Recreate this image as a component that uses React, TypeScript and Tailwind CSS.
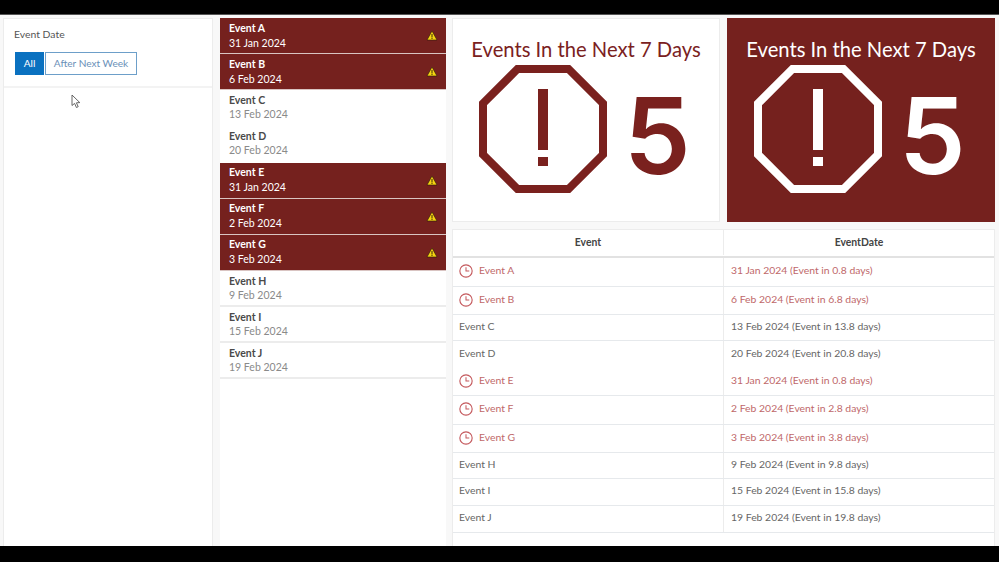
const listItems = [
  { name: "Event A", date: "31 Jan 2024", hot: true },
  { name: "Event B", date: "6 Feb 2024", hot: true },
  { name: "Event C", date: "13 Feb 2024", hot: false, noLine: true },
  { name: "Event D", date: "20 Feb 2024", hot: false, noLine: true, tall: true },
  { name: "Event E", date: "31 Jan 2024", hot: true, tight: true },
  { name: "Event F", date: "2 Feb 2024", hot: true, tight: true },
  { name: "Event G", date: "3 Feb 2024", hot: true, tight: true },
  { name: "Event H", date: "9 Feb 2024", hot: false },
  { name: "Event I", date: "15 Feb 2024", hot: false },
  { name: "Event J", date: "19 Feb 2024", hot: false },
];

const tableRows = [
  { name: "Event A", date: "31 Jan 2024", days: "0.8", hot: true, h: "h-[29px]" },
  { name: "Event B", date: "6 Feb 2024", days: "6.8", hot: true, h: "h-[28px]" },
  { name: "Event C", date: "13 Feb 2024", days: "13.8", hot: false, h: "h-[26px]" },
  { name: "Event D", date: "20 Feb 2024", days: "20.8", hot: false, h: "h-[27px]", noLine: true },
  { name: "Event E", date: "31 Jan 2024", days: "0.8", hot: true, h: "h-[28px]" },
  { name: "Event F", date: "2 Feb 2024", days: "2.8", hot: true, h: "h-[29px]" },
  { name: "Event G", date: "3 Feb 2024", days: "3.8", hot: true, h: "h-[28px]" },
  { name: "Event H", date: "9 Feb 2024", days: "9.8", hot: false, h: "h-[26px]" },
  { name: "Event I", date: "15 Feb 2024", days: "15.8", hot: false, h: "h-[27px]" },
  { name: "Event J", date: "19 Feb 2024", days: "19.8", hot: false, h: "h-[27px]" },
];

function WarningIcon() {
  return (
    <svg width="12" height="11" viewBox="0 0 12 11" className="shrink-0">
      <path d="M6 1 L11 10 L1 10 Z" fill="#f5d312" stroke="#2a1a08" strokeWidth="0.6" />
      <rect x="5.5" y="4" width="1" height="3.5" fill="#3a2806" />
      <rect x="5.5" y="8" width="1" height="1" fill="#3a2806" />
    </svg>
  );
}

function ClockIcon() {
  return (
    <svg width="14" height="14" viewBox="0 0 15 15" fill="none" stroke="#c4585c" className="shrink-0">
      <circle cx="7.5" cy="7.5" r="6.6" strokeWidth="1.2" />
      <path d="M7.5 3.5 V7.5 H11" strokeWidth="1.1" />
    </svg>
  );
}

function StopIcon({ color }: { color: string }) {
  return (
    <svg width="128" height="128" viewBox="0 0 128 128" className="shrink-0">
      <path d="M38.5 4 H89.5 L124 38.5 V89.5 L89.5 124 H38.5 L4 89.5 V38.5 Z" fill="none" stroke={color} strokeWidth="8" />
      <rect x="59" y="24" width="10" height="61" fill={color} />
      <rect x="59" y="92" width="10" height="9" fill={color} />
    </svg>
  );
}

function Card({ dark }: { dark?: boolean }) {
  const color = dark ? "#ffffff" : "#7a211e";
  return (
    <div
      className={
        dark
          ? "w-[268px] h-[204px] bg-[#75211e] flex flex-col items-center border border-[#75211e]"
          : "w-[268px] h-[204px] bg-white flex flex-col items-center border border-[#ececec]"
      }
    >
      <div className={dark ? "mt-[16px] text-[20.2px] leading-[28px] text-white" : "mt-[16px] text-[20.2px] leading-[28px] text-[#7a211e]"}>
        Events In the Next 7 Days
      </div>
      <div className="mt-[2px] w-full flex items-start pl-[26px]">
        <StopIcon color={color} />
        <span className="ml-[17px] mt-[7px] font-['Inter',sans-serif] text-[106px] leading-[128px] font-semibold" style={{ color }}>
          5
        </span>
      </div>
    </div>
  );
}

export default function App() {
  return (
    <div className="w-[999px] h-[562px] overflow-hidden bg-black flex flex-col font-['Lato','Liberation_Sans',sans-serif] text-[#4a4a4a]">
      <div className="h-[15px] shrink-0 border-b border-[#555]" />
      <div className="h-[531px] shrink-0 bg-[#f8f8f8] flex pt-[3px] pl-[3px] gap-[7px]">
        {/* filter panel */}
        <div className="w-[210px] bg-white border border-b-0 border-[#ececec]">
          <div className="h-[69px] border-b-2 border-[#f3f3f3] pt-[8px] pl-[10px]">
            <div className="text-[10.4px] leading-[14px] text-[#555]">Event Date</div>
            <div className="mt-[11px] ml-[1px] flex items-stretch h-[23px] text-[10.1px]">
              <div className="w-[29px] bg-[#0a71c0] text-white flex items-center justify-center">All</div>
              <div className="ml-[1px] w-[92px] border border-[#6d9fc9] bg-white text-[#6a90b8] flex items-center justify-center">
                After Next Week
              </div>
            </div>
          </div>
          <svg width="12" height="15" viewBox="0 0 12 15" className="ml-[67px] mt-[6px]">
            <path d="M1 1 L1 11.5 L3.6 9.4 L5.4 13.5 L7.2 12.7 L5.4 8.8 L8.8 8.6 Z" fill="#fff" stroke="#555" strokeWidth="0.9" />
          </svg>
        </div>

        {/* event list */}
        <div className="w-[226px] bg-white">
          {listItems.map((item) => (
            <div
              key={item.name}
              className={[
                "pl-[9px] pr-[8px] flex justify-between",
                item.tall ? "h-[37px]" : "h-[36px]",
                item.tight ? "pt-[2px]" : "pt-[3px]",
                item.hot
                  ? "bg-[#75211e] text-white border-b border-[#d9c4c2]"
                  : item.noLine
                    ? "bg-white"
                    : "bg-white border-b-2 border-[#ececec]",
              ].join(" ")}
            >
              <div>
                <div className={item.hot ? "text-[10.5px] leading-[14px] font-bold text-white" : "text-[10.5px] leading-[14px] font-bold text-[#4a4a4a]"}>
                  {item.name}
                </div>
                <div className={item.hot ? "mt-[1px] text-[10.5px] leading-[15px] text-white" : "text-[10.5px] leading-[14px] text-[#8a8a8a]"}>
                  {item.date}
                </div>
              </div>
              {item.hot && (
                <div className="flex items-center pb-[3px]">
                  <WarningIcon />
                </div>
              )}
            </div>
          ))}
        </div>

        {/* cards and table */}
        <div className="w-[543px] ml-[-1px] flex flex-col gap-[7px]">
          <div className="flex gap-[7px]">
            <Card />
            <Card dark />
          </div>
          <div className="flex-1 bg-white border border-b-0 border-[#ececec]">
            <div className="h-[28px] flex border-b-2 border-[#e2e2e2] text-[10.4px] font-bold text-[#444] pb-[1px]">
              <div className="w-[271px] border-r border-[#ececec] flex items-center justify-center">Event</div>
              <div className="flex-1 flex items-center justify-center">EventDate</div>
            </div>
            {tableRows.map((row) => (
              <div
                key={row.name}
                className={
                  row.noLine
                    ? `${row.h} flex text-[10.4px]`
                    : `${row.h} flex text-[10.4px] border-b border-[#e6e9ec]`
                }
              >
                <div
                  className={
                    row.hot
                      ? "w-[271px] border-r border-[#ececec] flex items-center pl-[6px] gap-[6px] pb-[2px] text-[#c0686a]"
                      : "w-[271px] border-r border-[#ececec] flex items-center pl-[6px] pb-[2px] text-[#666]"
                  }
                >
                  {row.hot && <ClockIcon />}
                  {row.name}
                </div>
                <div className={row.hot ? "flex-1 flex items-center pl-[7px] pb-[2px] text-[#c0686a]" : "flex-1 flex items-center pl-[7px] pb-[2px] text-[#666]"}>
                  {row.date} (Event in {row.days} days)
                </div>
              </div>
            ))}
          </div>
        </div>
      </div>
      <div className="flex-1" />
    </div>
  );
}
